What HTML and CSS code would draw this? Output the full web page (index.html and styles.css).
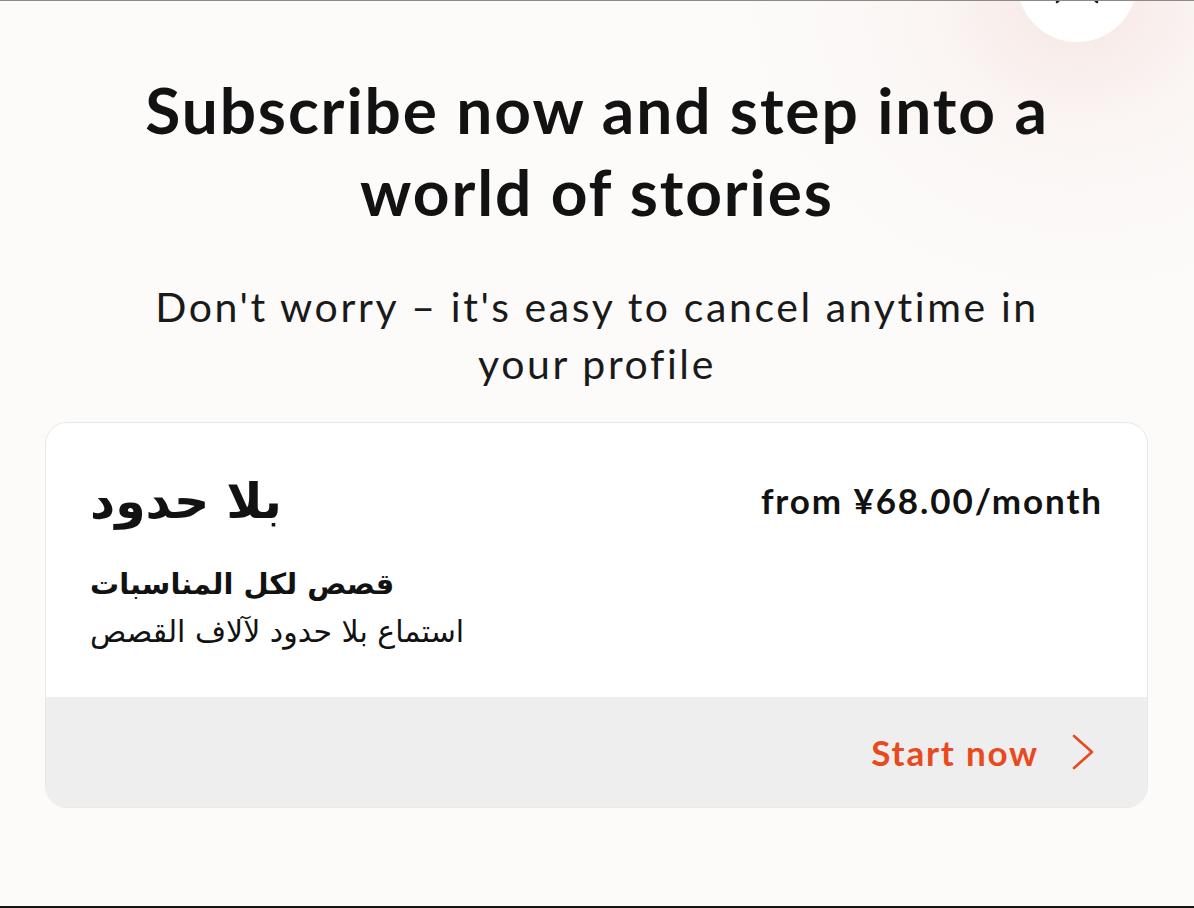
FILE: index.html
```html
<!DOCTYPE html>
<html lang="en">
<head>
    <meta charset="UTF-8">
    <meta name="viewport" content="width=device-width, initial-scale=1.0">
    <title>Subscribe</title>
    <link rel="stylesheet" href="styles.css">
</head>
<body>
    <button class="close-btn" aria-label="Close">
        <svg width="44" height="44" viewBox="0 0 44 44">
            <path d="M2 2 L42 42 M42 2 L2 42" stroke="#1c1c1c" stroke-width="2.5" stroke-linecap="round" fill="none"/>
        </svg>
    </button>

    <main class="paywall">
        <h1 class="headline">Subscribe now and step into a world of stories</h1>
        <p class="subline">Don't worry – it's easy to cancel anytime in your profile</p>

        <div class="plan-card">
            <div class="plan-body">
                <div class="plan-info">
                    <div class="plan-name" dir="rtl">بلا حدود</div>
                    <div class="plan-tagline" dir="rtl">قصص لكل المناسبات</div>
                    <div class="plan-desc" dir="rtl">استماع بلا حدود لآلاف القصص</div>
                </div>
                <div class="plan-price">from ¥68.00/month</div>
            </div>
            <a class="plan-footer" href="#">
                <span class="start-label">Start now</span>
                <svg class="chevron" width="24" height="36" viewBox="0 0 24 36">
                    <path d="M3 2 L21 18 L3 34" stroke="#e8491d" stroke-width="2.6" stroke-linecap="round" stroke-linejoin="round" fill="none"/>
                </svg>
            </a>
        </div>
    </main>
</body>
</html>
```

FILE: styles.css
```css
body {
    margin: 0;
    padding: 0;
    height: 905px;
    font-family: 'Lato', 'DejaVu Sans', sans-serif;
    /* soft pink haze around the close button */
    background: radial-gradient(ellipse 340px 300px at 1077px 0, rgba(245, 226, 222, 0.8) 0%, rgba(249, 238, 235, 0.4) 45%, rgba(252, 251, 250, 0) 100%), #fcfbfa;
    color: #121212;
    border-top: 1px solid #8c8a87;
    border-bottom: 2px solid #141414;
    position: relative;
    overflow: hidden;
}

.close-btn {
    position: absolute;
    top: -79px;
    right: 57px;
    width: 120px;
    height: 120px;
    border: none;
    border-radius: 50%;
    background: #ffffff;
    display: flex;
    align-items: center;
    justify-content: center;
    padding: 0;
}

.paywall {
    display: flex;
    flex-direction: column;
    align-items: center;
    padding-top: 68px;
}

.headline {
    margin: 0;
    width: 980px;
    text-align: center;
    font-size: 64px;
    font-weight: 700;
    line-height: 82px;
    letter-spacing: 1.9px;
}

.subline {
    margin: 45px 0 0;
    width: 920px;
    text-align: center;
    font-size: 41px;
    font-weight: 400;
    line-height: 57px;
    letter-spacing: 2.6px;
    color: #1a1a1a;
}

.plan-card {
    align-self: stretch;
    margin: 30px 46px 0 45px;
    background: #ffffff;
    border: 1px solid #eae8e6;
    border-radius: 22px;
    overflow: hidden;
}

.plan-body {
    height: 274px;
    box-sizing: border-box;
    padding: 49px 44px 0 44px;
    display: flex;
    justify-content: space-between;
    align-items: flex-start;
}

.plan-info {
    display: flex;
    flex-direction: column;
    align-items: flex-start;
    font-family: 'DejaVu Sans', sans-serif;
}

.plan-name {
    font-size: 49px;
    font-weight: 700;
    line-height: 60px;
}

.plan-tagline {
    margin-top: 30px;
    font-size: 29px;
    font-weight: 700;
    line-height: 44px;
}

.plan-desc {
    margin-top: 2px;
    font-size: 30px;
    line-height: 48px;
}

.plan-price {
    margin-top: 6px;
    font-size: 35px;
    font-weight: 700;
    line-height: 44px;
    letter-spacing: 1.9px;
}

.plan-footer {
    height: 110px;
    background: #efeeee;
    display: flex;
    justify-content: flex-end;
    align-items: center;
    gap: 32px;
    padding-right: 52px;
    text-decoration: none;
}

.start-label {
    color: #e8491d;
    font-size: 35px;
    font-weight: 700;
    letter-spacing: 1.8px;
}
```
